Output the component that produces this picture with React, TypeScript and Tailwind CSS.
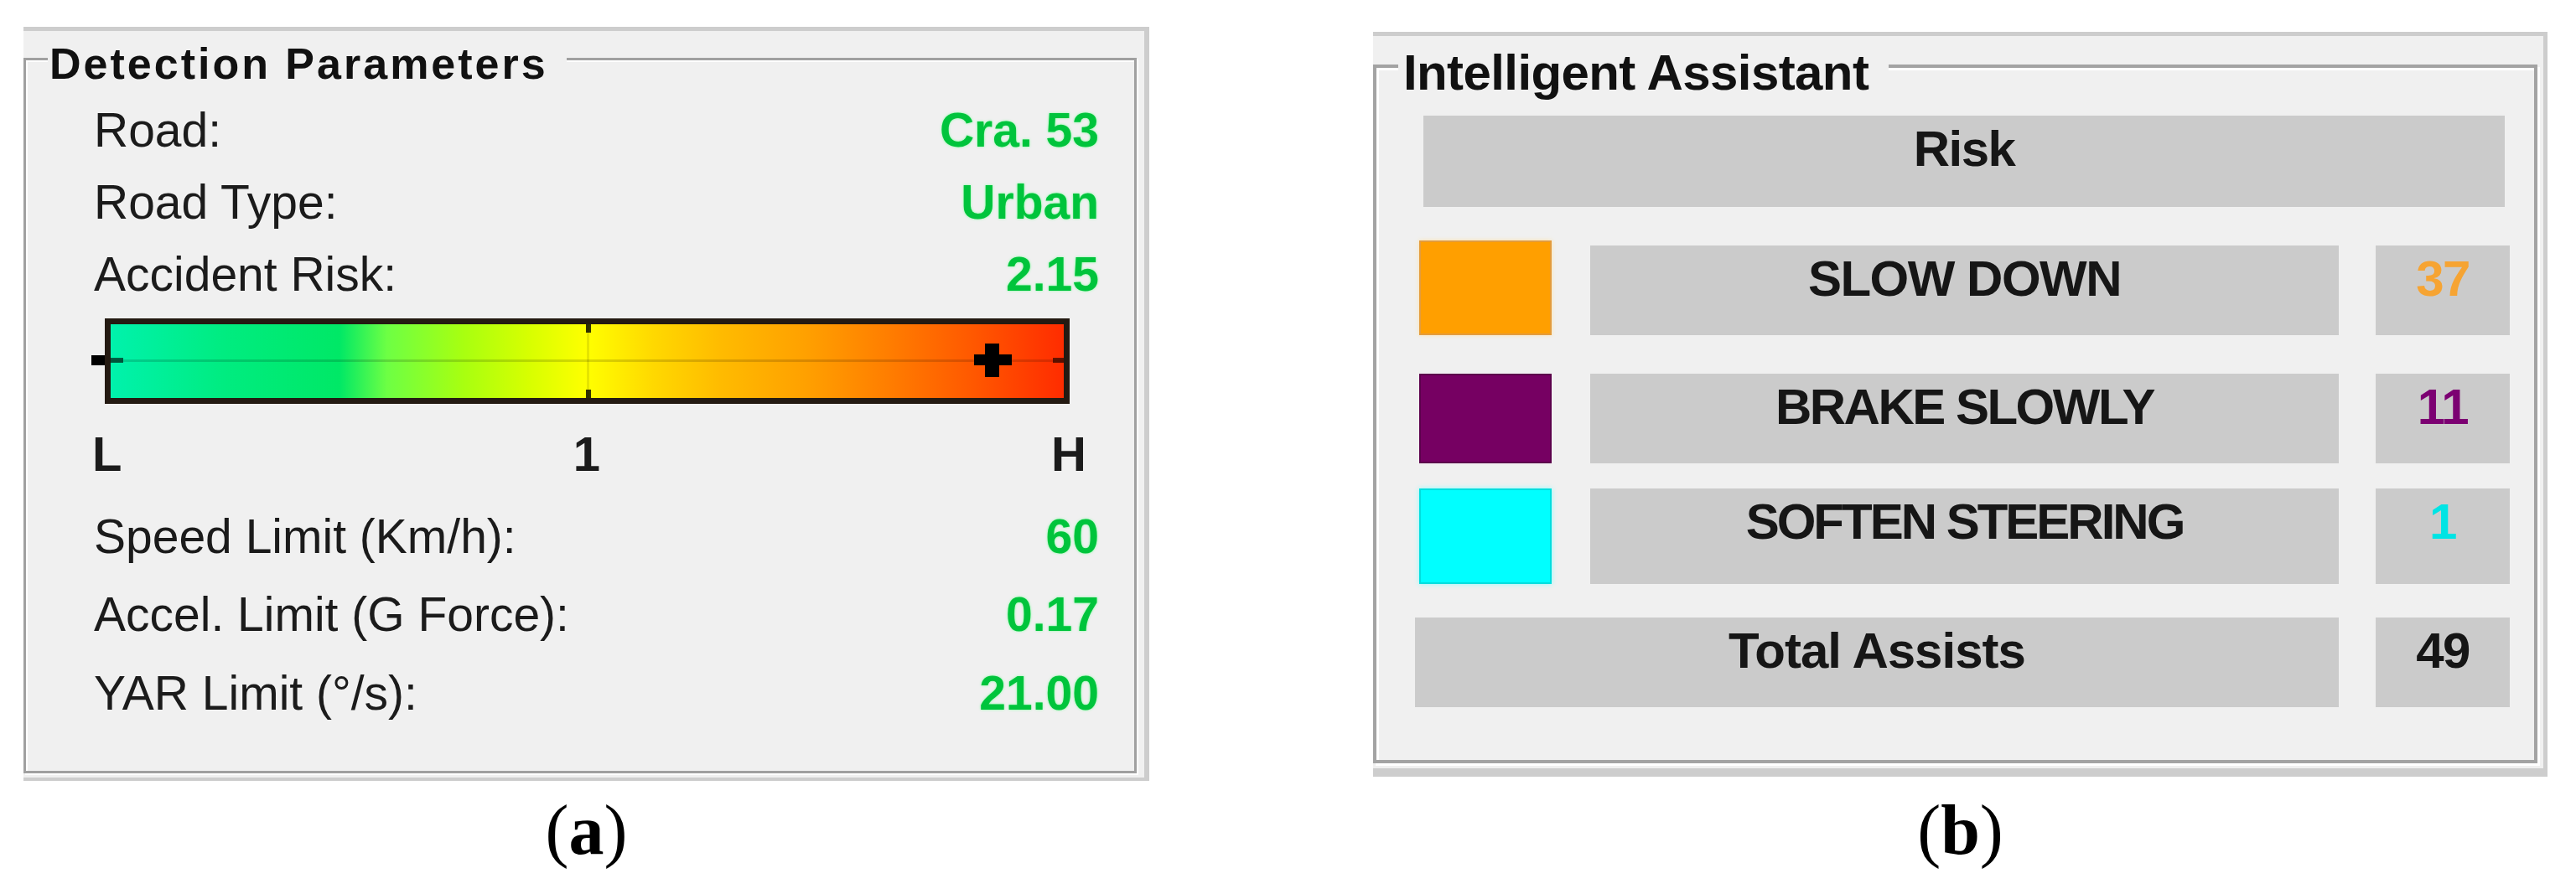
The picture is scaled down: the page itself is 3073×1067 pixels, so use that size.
const green = 'font-bold text-[#00c43c] [text-shadow:0_0_3px_#7dff9c]'

function ParamRow({ label, value, h }: { label: string; value: string; h: string }) {
    return (
        <div className={`flex justify-between items-start text-[57px] leading-none ${h}`}>
            <span className="text-[#1b1b1b]">{label}</span>
            <span className={green}>{value}</span>
        </div>
    )
}

function RiskBar() {
    return (
        <div className="relative ml-[13px] w-[1151px] h-[102px] border-[7px] border-[#241a12] bg-[linear-gradient(to_right,#00f2ac_0%,#00ec80_12%,#00e866_24%,#6dff44_29%,#a8ff10_37%,#d8ff00_44%,#ffff00_50%,#ffd800_57%,#ffbb00_64%,#ffa000_73%,#ff8000_81%,#ff5a00_90%,#ff2c00_100%)]">
            {/* centre line */}
            <div className="absolute left-0 right-0 top-[42px] h-[3px] bg-black/15" />
            {/* low end tick */}
            <div className="absolute -left-[23px] top-[37px] w-[16px] h-[12px] bg-black" />
            <div className="absolute left-0 top-[40px] w-[15px] h-[6px] bg-black/60" />
            {/* high end tick */}
            <div className="absolute right-0 top-[40px] w-[13px] h-[6px] bg-black/60" />
            {/* mid tick */}
            <div className="absolute left-[568px] top-0 bottom-0 w-[3px] bg-black/10" />
            <div className="absolute left-[567px] top-0 w-[6px] h-[10px] bg-black/80" />
            <div className="absolute left-[567px] bottom-0 w-[6px] h-[10px] bg-black/80" />
            {/* current value marker */}
            <div className="absolute left-[1030px] top-[36px] w-[45px] h-[13px] bg-black" />
            <div className="absolute left-[1043px] top-[23px] w-[17px] h-[40px] bg-black" />
        </div>
    )
}

function DetectionParameters() {
    return (
        <div className="w-[1343px] h-[900px] border-t-[5px] border-r-[6px] border-b-[4px] border-[#cdcdcd] bg-[#f0f0f0] pt-[32px]">
            <div className="relative w-[1328px] h-[854px] border-[3px] border-[#a0a0a0] shadow-[inset_2px_2px_0_#ffffff,2px_2px_0_#ffffff] pl-[81px] pr-[42px] pt-[55px]">
                <div className="absolute left-[26px] -top-[22px] pl-[2px] pr-[22px] bg-[#f0f0f0] text-[52px] font-bold leading-none tracking-[3px] text-[#111]">
                    Detection Parameters
                </div>
                <ParamRow label="Road:" value="Cra. 53" h="h-[86px]" />
                <ParamRow label="Road Type:" value="Urban" h="h-[86px]" />
                <ParamRow label="Accident Risk:" value="2.15" h="h-[81px]" />
                <RiskBar />
                <div className="-ml-[2px] mt-[31px] w-[1186px] h-[99px] flex justify-between items-start text-[58px] font-bold leading-none text-[#1b1b1b]">
                    <span>L</span>
                    <span>1</span>
                    <span>H</span>
                </div>
                <ParamRow label="Speed Limit (Km/h):" value="60" h="h-[93px]" />
                <ParamRow label="Accel. Limit (G Force):" value="0.17" h="h-[94px]" />
                <ParamRow label="YAR Limit (°/s):" value="21.00" h="h-[60px]" />
            </div>
        </div>
    )
}

const boxText = 'bg-[#cbcbcb] flex justify-center pt-[10px] text-[60px] font-bold leading-none'

function AssistRow({ swatch, label, track, count, countColor, mt, h }: { swatch: string; label: string; track: string; count: string; countColor: string; mt: string; h: string }) {
    return (
        <div className={`flex items-end ${mt}`}>
            <div className={`ml-[5px] w-[158px] ${swatch}`} />
            <div className={`ml-[46px] w-[893px] ${h} ${boxText} ${track} text-[#161616]`}>{label}</div>
            <div className={`ml-[44px] w-[160px] ${h} ${boxText} tracking-[-1.5px] ${countColor}`}>{count}</div>
        </div>
    )
}

function IntelligentAssistant() {
    return (
        <div className="w-[1401px] h-[889px] border-t-[5px] border-r-[5px] border-b-[10px] border-[#cdcdcd] bg-[#f0f0f0] pt-[34px]">
            <div className="relative w-[1389px] h-[834px] border-[4px] border-[#a3a3a3] shadow-[inset_3px_3px_0_#ffffff,3px_3px_0_#ffffff] pl-[46px] pt-[57px]">
                <div className="absolute left-[26px] -top-[24px] pl-[6px] pr-[24px] bg-[#f0f0f0] text-[60px] font-bold leading-none tracking-[-0.6px] text-[#111]">
                    Intelligent Assistant
                </div>
                <div className={`ml-[10px] w-[1290px] h-[109px] ${boxText} tracking-[-1.5px] text-[#161616]`}>Risk</div>
                <AssistRow
                    swatch="h-[113px] bg-[#ff9f00] border-[2px] border-[#e39c3c] shadow-[0_0_5px_#ffe2a8]"
                    label="SLOW DOWN"
                    track="tracking-[-1.5px]"
                    count="37"
                    countColor="text-[#f6a433]"
                    mt="mt-[40px]"
                    h="h-[107px]"
                />
                <AssistRow
                    swatch="h-[107px] bg-[#760062] border-[2px] border-[#5c004c]"
                    label="BRAKE SLOWLY"
                    track="tracking-[-2.5px]"
                    count="11"
                    countColor="text-[#7c0072]"
                    mt="mt-[46px]"
                    h="h-[107px]"
                />
                <AssistRow
                    swatch="h-[114px] bg-[#00ffff] border-[2px] border-[#00dede] shadow-[0_0_6px_#8afcff]"
                    label="SOFTEN STEERING"
                    track="tracking-[-3px]"
                    count="1"
                    countColor="text-[#00e4e4]"
                    mt="mt-[30px]"
                    h="h-[114px]"
                />
                <div className="flex mt-[40px]">
                    <div className={`w-[1102px] h-[107px] ${boxText} tracking-[-1px] text-[#161616]`}>Total Assists</div>
                    <div className={`ml-[44px] w-[160px] h-[107px] ${boxText} tracking-[-1.5px] text-[#151515]`}>49</div>
                </div>
            </div>
        </div>
    )
}

function Caption({ letter, mt }: { letter: string; mt: string }) {
    return (
        <div className={`${mt} font-['Liberation_Serif',serif] text-[84px] leading-none text-black`}>
            (<b>{letter}</b>)
        </div>
    )
}

export default function App() {
    return (
        <div className="w-[3073px] h-[1067px] overflow-hidden bg-white flex pl-[28px] font-['Liberation_Sans',Arial,sans-serif]">
            <div className="w-[1343px] pt-[32px] flex flex-col items-center">
                <DetectionParameters />
                <Caption letter="a" mt="mt-[17px]" />
            </div>
            <div className="ml-[267px] w-[1401px] pt-[38px] flex flex-col items-center">
                <IntelligentAssistant />
                <Caption letter="b" mt="mt-[22px]" />
            </div>
        </div>
    )
}
